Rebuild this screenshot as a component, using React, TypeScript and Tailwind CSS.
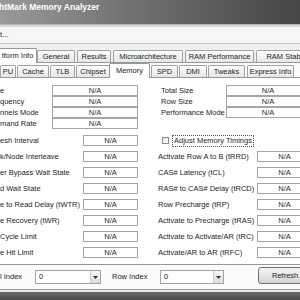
import React from 'react'

const blockA = [
  { l: 'e', r: 'Total Size' },
  { l: 'quency', r: 'Row Size' },
  { l: 'nnels Mode', r: 'Performance Mode' },
  { l: 'mand Rate', r: '' },
]

const timingsLeft = [
  'esh Interval',
  'k/Node Interleave',
  'er Bypass Wait State',
  'd Wait State',
  'e to Read Delay (tWTR)',
  'e Recovery (tWR)',
  'Cycle Limit',
  'e Hit Limit',
]

const timingsRight = [
  '',
  'Activate Row A to B (tRRD)',
  'CAS# Latency (tCL)',
  'RAS# to CAS# Delay (tRCD)',
  'Row Precharge (tRP)',
  'Activate to Precharge (tRAS)',
  'Activate to Activate/AR (tRC)',
  'Activate/AR to AR (tRFC)',
]

const outerTabs = [
  { label: 'tform Info', x: 0, w: 36, active: true },
  { label: 'General', x: 37, w: 38 },
  { label: 'Results', x: 77, w: 34 },
  { label: 'Microarchitecture', x: 113, w: 70 },
  { label: 'RAM Performance', x: 185, w: 69 },
  { label: 'RAM Stabili', x: 256, w: 60 },
]

const innerTabs = [
  { label: 'PU', x: 0, w: 16 },
  { label: 'Cache', x: 17, w: 32 },
  { label: 'TLB', x: 50, w: 25 },
  { label: 'Chipset', x: 76, w: 34 },
  { label: 'Memory', x: 111, w: 38, active: true },
  { label: 'SPD', x: 151, w: 27 },
  { label: 'DMI', x: 179, w: 28 },
  { label: 'Tweaks', x: 208, w: 37 },
  { label: 'Express Info', x: 247, w: 47 },
]

type Tab = { label: string; x: number; w: number; active?: boolean }

function TabRow({ tabs }: { tabs: Tab[] }) {
  return (
    <div className="relative h-full">
      {tabs.map((t) =>
        t.active ? (
          <div
            key={t.label}
            className="absolute bottom-[-1px] h-[15px] z-10 bg-white border border-b-0 border-[#919b9c] rounded-t-[2px] flex items-center justify-center pb-[1px] whitespace-nowrap"
            style={{ left: t.x - 2, width: t.w + 3 }}
          >
            {t.label}
          </div>
        ) : (
          <div
            key={t.label}
            className="absolute bottom-0 h-[12px] bg-gradient-to-b from-[#fdfdfd] to-[#e6e6e6] border border-b-0 border-[#9ea3a6] rounded-t-[2px] flex items-center justify-center whitespace-nowrap"
            style={{ left: t.x, width: t.w }}
          >
            {t.label}
          </div>
        )
      )}
    </div>
  )
}

function Box({ children }: { children: React.ReactNode }) {
  return (
    <div className="h-[11px] border border-[#a5a5a5] bg-white flex items-center justify-center text-[#2a2a2a]">
      {children}
    </div>
  )
}

function Combo({ w }: { w: string }) {
  return (
    <div className={`${w} shrink-0 h-[14px] border border-[#a3a3a3] bg-white flex items-center`}>
      <span className="flex-1 pl-[3px]">0</span>
      <div className="w-[10px] h-full border-l border-[#c8c8c8] bg-gradient-to-b from-[#f7f7f7] to-[#dcdcdc] flex items-center justify-center">
        <svg width="5" height="3" viewBox="0 0 5 3">
          <path d="M0 0h5L2.5 3z" fill="#333" />
        </svg>
      </div>
    </div>
  )
}

export default function App() {
  return (
    <div className="w-[300px] h-[300px] overflow-hidden flex flex-col bg-[#f0f0f0] text-[7.5px] leading-none text-[#1e1e1e] font-['Liberation_Sans',Arial,sans-serif]">
      {/* title bar */}
      <div className="h-[24px] shrink-0 bg-gradient-to-r from-[#9a9a9a] via-[#6c6c6c] to-[#464646] text-white font-bold text-[8.5px] pt-[3px] -ml-px">
        htMark Memory Analyzer
      </div>
      <div className="h-[3px] shrink-0 bg-[#d9d9d9] border-t border-[#b4b4b4]" />

      {/* menu */}
      <div className="h-[17px] shrink-0 bg-[#f6f6f6] border-b border-[#c2c2c2] flex items-center pb-[1px]">
        t...
      </div>

      {/* outer tabs */}
      <div className="h-[18px] shrink-0">
        <TabRow tabs={outerTabs} />
      </div>

      {/* outer panel */}
      <div className="h-[228px] shrink-0 bg-[#fbfbfb] border-t border-b border-[#919b9c] flex flex-col">
        <div className="h-[14px] shrink-0">
          <TabRow tabs={innerTabs} />
        </div>

        {/* memory panel */}
        <div className="h-[188px] shrink-0 bg-white border-t border-b border-[#919b9c] pt-[7px] overflow-hidden">
          <div className="grid grid-cols-[52px_86px_23px_65px_84px] auto-rows-[11px] w-[310px]">
            {blockA.map((r) => (
              <React.Fragment key={r.l}>
                <div className="flex items-center whitespace-nowrap">{r.l}</div>
                <Box>N/A</Box>
                <div />
                <div className="flex items-center whitespace-nowrap">{r.r}</div>
                {r.r ? <Box>N/A</Box> : <div />}
              </React.Fragment>
            ))}
          </div>

          <div className="grid grid-cols-[83px_55px_20px_99px_55px] auto-rows-[16px] w-[312px] mt-[6px]">
            {timingsLeft.map((l, i) => (
              <React.Fragment key={l}>
                <div className="h-[11px] flex items-center whitespace-nowrap">{l}</div>
                <Box>N/A</Box>
                <div />
                {i === 0 ? (
                  <div className="col-span-2 flex items-start pl-[4px]">
                    <div className="w-[7px] h-[7px] mt-[2px] shrink-0 border border-[#8a8a8a] bg-gradient-to-br from-[#e4e4e4] to-white" />
                    <div className="ml-[3px] h-[12px] px-[1px] border border-dotted border-[#555] flex items-center whitespace-nowrap">
                      Adjust Memory Timings
                    </div>
                  </div>
                ) : (
                  <>
                    <div className="h-[11px] flex items-center whitespace-nowrap">{timingsRight[i]}</div>
                    <Box>N/A</Box>
                  </>
                )}
              </React.Fragment>
            ))}
          </div>
        </div>

        {/* bottom controls */}
        <div className="flex-1 flex items-center">
          <div className="w-[35px] shrink-0">l Index</div>
          <Combo w="w-[66px]" />
          <div className="ml-[11px] w-[48px] shrink-0">Row Index</div>
          <Combo w="w-[64px]" />
          <div className="ml-[34px] w-[55px] shrink-0 h-[17px] mb-[3px] rounded-[3px] border border-[#707070] bg-gradient-to-b from-[#f3f3f3] via-[#e6e6e6] to-[#d2d2d2] flex items-center pl-[13px] whitespace-nowrap">
            Refresh
          </div>
        </div>
      </div>

      <div className="h-[2px] shrink-0 bg-[#e8e8e8]" />
      <div className="flex-1 bg-gradient-to-b from-[#6a6a6a] to-[#4a4a4a]" />
    </div>
  )
}
